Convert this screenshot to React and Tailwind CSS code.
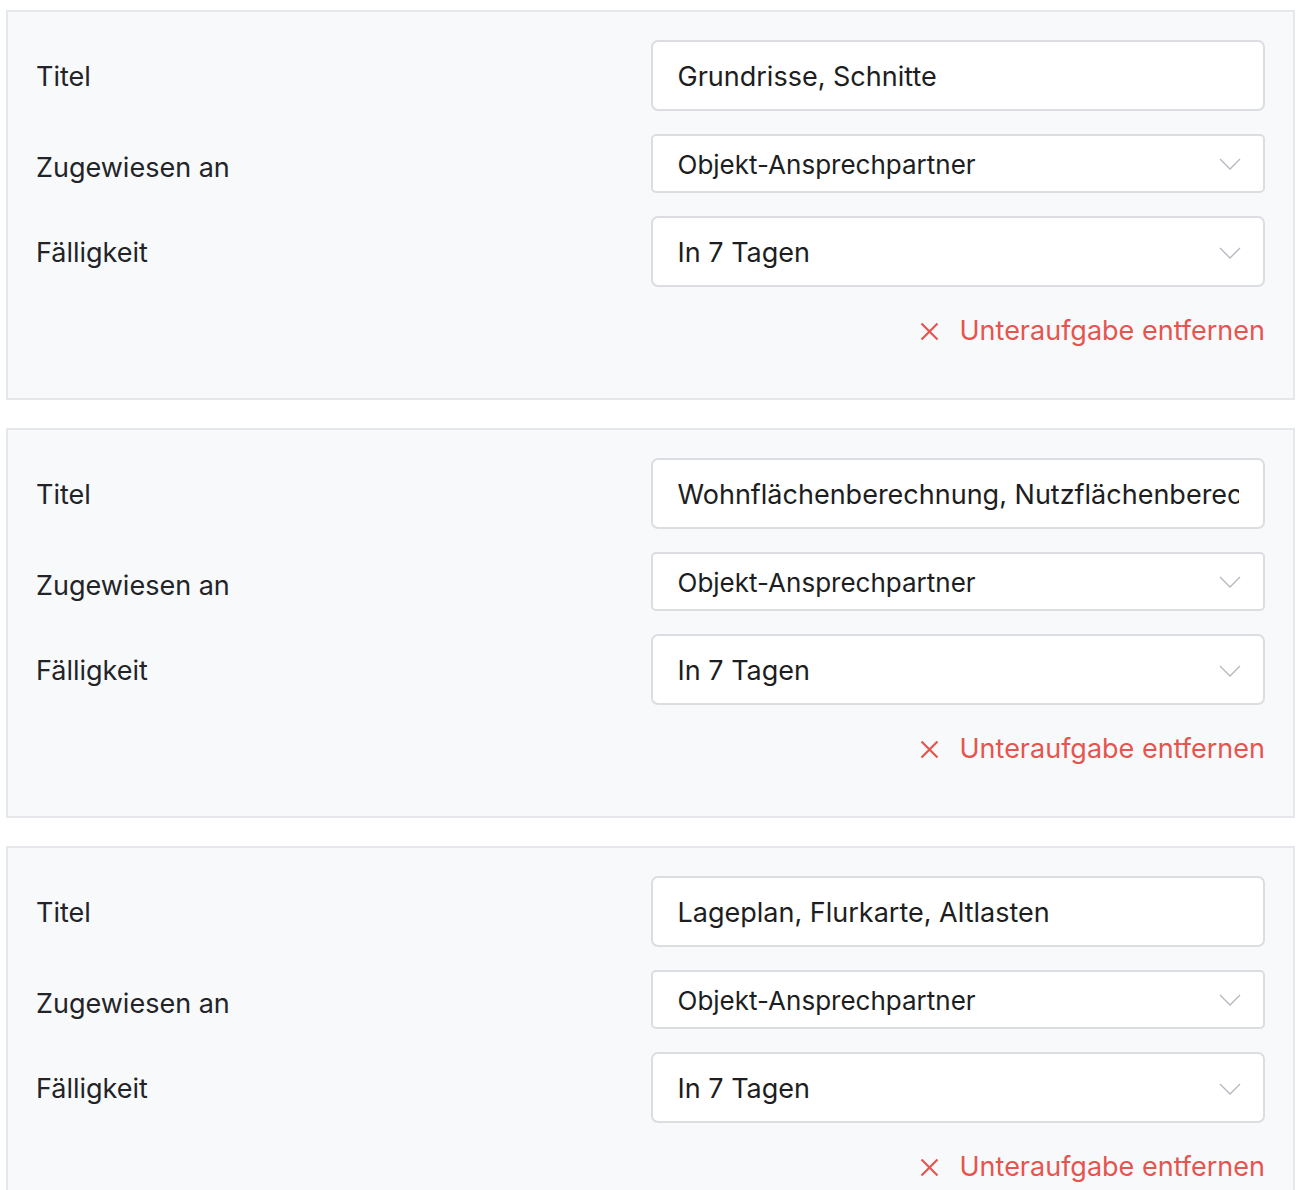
import React from "react";

const Chevron = () => (
  <svg width="22" height="12" viewBox="0 0 22 12" fill="none" className="shrink-0">
    <path d="M1 1 L11 11 L21 1" stroke="#b4b7bd" strokeWidth="1.3" />
  </svg>
);

const XIcon = () => (
  <svg width="19" height="19" viewBox="0 0 19 19" fill="none" className="shrink-0">
    <path d="M1.5 1.5 L17.5 17.5 M17.5 1.5 L1.5 17.5" stroke="#e5554f" strokeWidth="2.2" />
  </svg>
);

function Card({ title }) {
  return (
    <div className="border-2 border-[#e5e7eb] bg-[#f8f9fb] px-[28px] pt-[28px] pb-[49px]">
      <div className="grid grid-cols-2">
        <div className="flex items-center h-[71px] pt-[3px] text-[27px] text-[#222428]">Titel</div>
        <div className="h-[71px] bg-white border-2 border-[#dcdde0] rounded-[7px] flex items-center pt-[3px] pl-[25px] pr-[24px] overflow-hidden">
          <span className="text-[27px] text-[#1c1e22] whitespace-nowrap overflow-hidden">{title}</span>
        </div>

        <div className="flex items-center h-[59px] mt-[23px] pt-[10px] text-[27px] text-[#222428]">Zugewiesen an</div>
        <div className="h-[59px] mt-[23px] bg-white border-2 border-[#dcdde0] rounded-[5px] flex items-center justify-between pt-[1px] pl-[25px] pr-[22px]">
          <span className="text-[26px] text-[#1c1e22] whitespace-nowrap">Objekt-Ansprechpartner</span>
          <Chevron />
        </div>

        <div className="flex items-center h-[71px] mt-[23px] pt-[3px] text-[27px] text-[#222428]">Fälligkeit</div>
        <div className="h-[71px] mt-[23px] bg-white border-2 border-[#dcdde0] rounded-[7px] flex items-center justify-between pt-[3px] pl-[25px] pr-[22px]">
          <span className="text-[27px] text-[#1c1e22] whitespace-nowrap">In 7 Tagen</span>
          <Chevron />
        </div>
      </div>
      <div className="flex justify-end items-center mt-[26px] h-[36px] gap-[21px]">
        <XIcon />
        <span className="text-[27px] text-[#e5554f] leading-[36px]">Unteraufgabe entfernen</span>
      </div>
    </div>
  );
}

export default function App() {
  return (
    <div className="bg-white min-h-screen pl-[6px] pr-[13px] pt-[10px] flex flex-col gap-[28px]" style={{ fontFamily: "Inter, 'Noto Sans', sans-serif" }}>
      <Card title="Grundrisse, Schnitte" />
      <Card title="Wohnflächenberechnung, Nutzflächenberechnung" />
      <Card title="Lageplan, Flurkarte, Altlasten" />
    </div>
  );
}
